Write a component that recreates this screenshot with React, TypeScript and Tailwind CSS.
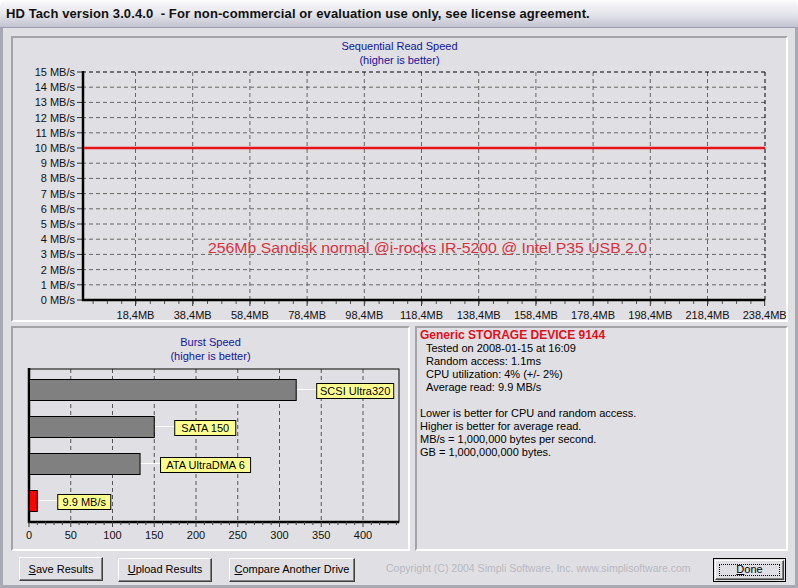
const topRows = Array.from({ length: 16 }, (_, i) => 15 - i);
const topCols = Array.from({ length: 12 }, (_, k) => ({ x: 122.5 + k * 57.2, label: `${18 + k * 20},4MB` }));
const topTicks = Array.from({ length: 48 }, (_, j) => 80.1 + j * 14.3).filter((x) => x < 752);

const burstScale = 0.835;
const bx = (v: number) => 16 + v * burstScale;
const bursts = [
  { v: 320, label: 'SCSI Ultra320', w: 77, fill: '#808080' },
  { v: 150, label: 'SATA 150', w: 61, fill: '#808080' },
  { v: 133, label: 'ATA UltraDMA 6', w: 90, fill: '#808080' },
  { v: 9.9, label: '9.9 MB/s', w: 53, fill: '#ff0000' },
];

function Panel({ className, children }: { className: string; children: React.ReactNode }) {
  return (
    <div className={`border-t-2 border-l-2 border-b-2 border-r-2 border-t-[#a3a3a8] border-l-[#a3a3a8] border-b-white border-r-white ${className}`}>
      {children}
    </div>
  );
}

function ChartTitle({ title }: { title: string }) {
  return (
    <div className="flex flex-col items-center text-[11px] leading-[14px] text-[#14149c]">
      <span>{title}</span>
      <span>(higher is better)</span>
    </div>
  );
}

function SequentialChart() {
  return (
    <svg width={773} height={253} className="block">
      {topRows.map((v, i) => {
        const y = 5 + i * 15.2;
        return (
          <g key={v}>
            <text x={62} y={y + 4} fontSize={11} textAnchor="end" fill="#111">{`${v} MB/s`}</text>
            <line x1={64} x2={69} y1={y} y2={y} stroke="#333" />
            {i > 0 && i < 15 && <line x1={69} x2={752} y1={y} y2={y} stroke="#666" strokeDasharray="4 3" />}
          </g>
        );
      })}
      {topCols.map((c, k) => (
        <g key={c.label}>
          {k < 11 && <line x1={c.x} x2={c.x} y1={5} y2={233} stroke="#666" strokeDasharray="4 3" />}
          <line x1={c.x} x2={c.x} y1={233} y2={239} stroke="#333" />
          <text x={c.x} y={252} fontSize={11} textAnchor="middle" fill="#111">{c.label}</text>
        </g>
      ))}
      {topTicks.map((x) => (
        <line key={x} x1={x} x2={x} y1={233} y2={237} stroke="#555" />
      ))}
      <line x1={69} x2={752} y1={5} y2={5} stroke="#000" strokeDasharray="4 3" />
      <line x1={752} x2={752} y1={5} y2={233} stroke="#000" strokeDasharray="4 3" />
      <line x1={70} x2={70} y1={4} y2={234} stroke="#000" strokeWidth={2.5} />
      <line x1={69} x2={752} y1={233} y2={233} stroke="#000" strokeWidth={2.5} />
      <line x1={71} x2={752} y1={81} y2={81} stroke="#e8141c" strokeWidth={2.5} />
      <text x={195} y={185.5} fontSize={15} fill="#d9323f" textLength={439} lengthAdjust="spacingAndGlyphs">
        256Mb Sandisk normal @i-rocks IR-5200 @ Intel P35 USB 2.0
      </text>
    </svg>
  );
}

function BurstChart() {
  const ticks = Array.from({ length: 45 }, (_, i) => i * 10);
  return (
    <svg width={395} height={186} className="block">
      {[50, 100, 150, 200, 250, 300, 350, 400].map((v) => (
        <line key={v} x1={bx(v)} x2={bx(v)} y1={6} y2={159} stroke="#555" strokeDasharray="4 3" />
      ))}
      <rect x={16} y={6} width={370} height={153} fill="none" stroke="#000" />
      <line x1={16} x2={16} y1={5} y2={160} stroke="#000" strokeWidth={2.5} />
      <line x1={15} x2={386} y1={159} y2={159} stroke="#000" strokeWidth={2.5} />
      {ticks.map((v) => (
        <line key={v} x1={bx(v)} x2={bx(v)} y1={159} y2={v % 50 === 0 ? 164 : 162} stroke="#444" />
      ))}
      {[0, 50, 100, 150, 200, 250, 300, 350, 400].map((v) => (
        <text key={v} x={bx(v)} y={176} fontSize={11} textAnchor="middle" fill="#111">{v}</text>
      ))}
      {bursts.map((b, i) => {
        const top = 16 + i * 37;
        const end = bx(b.v);
        const lx = end + 20;
        return (
          <g key={b.label}>
            <line x1={end} x2={lx} y1={top + 10.5} y2={top + 10.5} stroke="#fff" />
            <rect x={16.5} y={top + 0.5} width={end - 16.5} height={21} fill={b.fill} stroke="#000" />
            <rect x={lx + 0.5} y={top + 4.5} width={b.w} height={15} fill="#ffff90" stroke="#000" />
            <text x={lx + 0.5 + b.w / 2} y={top + 16} fontSize={11} textAnchor="middle" fill="#000">{b.label}</text>
          </g>
        );
      })}
    </svg>
  );
}

function Button({ label, hot, width, focused }: { label: string; hot: number; width: string; focused?: boolean }) {
  const text = (
    <span>
      {label.slice(0, hot)}
      <span className="underline">{label[hot]}</span>
      {label.slice(hot + 1)}
    </span>
  );
  return (
    <button
      className={`${width} h-[24px] text-[11px] text-black bg-[#e0dfe3] ${
        focused ? 'border border-black p-[1px]' : ''
      }`}
    >
      <div className="w-full h-full flex items-center justify-center border border-t-white border-l-white border-b-[#404040] border-r-[#404040] shadow-[inset_-1px_-1px_0_#808080]">
        {focused ? (
          <div className="w-[calc(100%-6px)] h-[calc(100%-6px)] flex items-center justify-center border border-dotted border-black">
            {text}
          </div>
        ) : (
          text
        )}
      </div>
    </button>
  );
}

export default function App() {
  return (
    <div className="w-[798px] h-[588px] flex flex-col font-['Liberation_Sans',Arial,sans-serif] select-none">
      <div className="h-[28px] shrink-0 flex items-center pl-[6px] rounded-t-[6px] bg-gradient-to-b from-[#fbfbfc] via-[#e6e6ec] to-[#c3c3d1] border-b border-[#9c9cac]">
        <span className="whitespace-pre font-bold text-[13px] tracking-[0.1px] text-[#111]">
          HD Tach version 3.0.4.0  - For non-commercial or evaluation use only, see license agreement.
        </span>
      </div>
      <div className="flex-1 flex flex-col bg-[#e0dfe3] border-l-[3px] border-r-[3px] border-b-[3px] border-[#a9a9b4] pl-[8px] pr-[7px] pt-[8px]">
        <Panel className="h-[286px] flex flex-col">
          <div className="pt-[1px]">
            <ChartTitle title="Sequential Read Speed" />
          </div>
          <SequentialChart />
        </Panel>
        <div className="flex gap-[5px] mt-[4px] h-[225px]">
          <Panel className="w-[399px] flex flex-col">
            <div className="pt-[7px]">
              <ChartTitle title="Burst Speed" />
            </div>
            <BurstChart />
          </Panel>
          <Panel className="flex-1 pl-[3px] pt-[1px] text-[11px] leading-[13px] text-black">
            <div className="font-bold text-[12px] text-[#e0101c]">Generic STORAGE DEVICE 9144</div>
            <div className="pl-[6px]">
              <div>Tested on 2008-01-15 at 16:09</div>
              <div>Random access: 1.1ms</div>
              <div>CPU utilization: 4% (+/- 2%)</div>
              <div>Average read: 9.9 MB/s</div>
            </div>
            <div className="h-[13px]" />
            <div>Lower is better for CPU and random access.</div>
            <div>Higher is better for average read.</div>
            <div>MB/s = 1,000,000 bytes per second.</div>
            <div>GB = 1,000,000,000 bytes.</div>
          </Panel>
        </div>
        <div className="flex items-center mt-[6px] h-[24px] pl-[8px] pr-[2px]">
          <Button label="Save Results" hot={0} width="w-[84px]" />
          <div className="ml-[15px]">
            <Button label="Upload Results" hot={0} width="w-[94px]" />
          </div>
          <div className="ml-[17px]">
            <Button label="Compare Another Drive" hot={0} width="w-[126px]" />
          </div>
          <span className="ml-[31px] text-[10.5px] text-[#b9b9c2] whitespace-nowrap">
            Copyright (C) 2004 Simpli Software, Inc. www.simplisoftware.com
          </span>
          <div className="ml-auto">
            <Button label="Done" hot={0} width="w-[73px]" focused />
          </div>
        </div>
      </div>
    </div>
  );
}
